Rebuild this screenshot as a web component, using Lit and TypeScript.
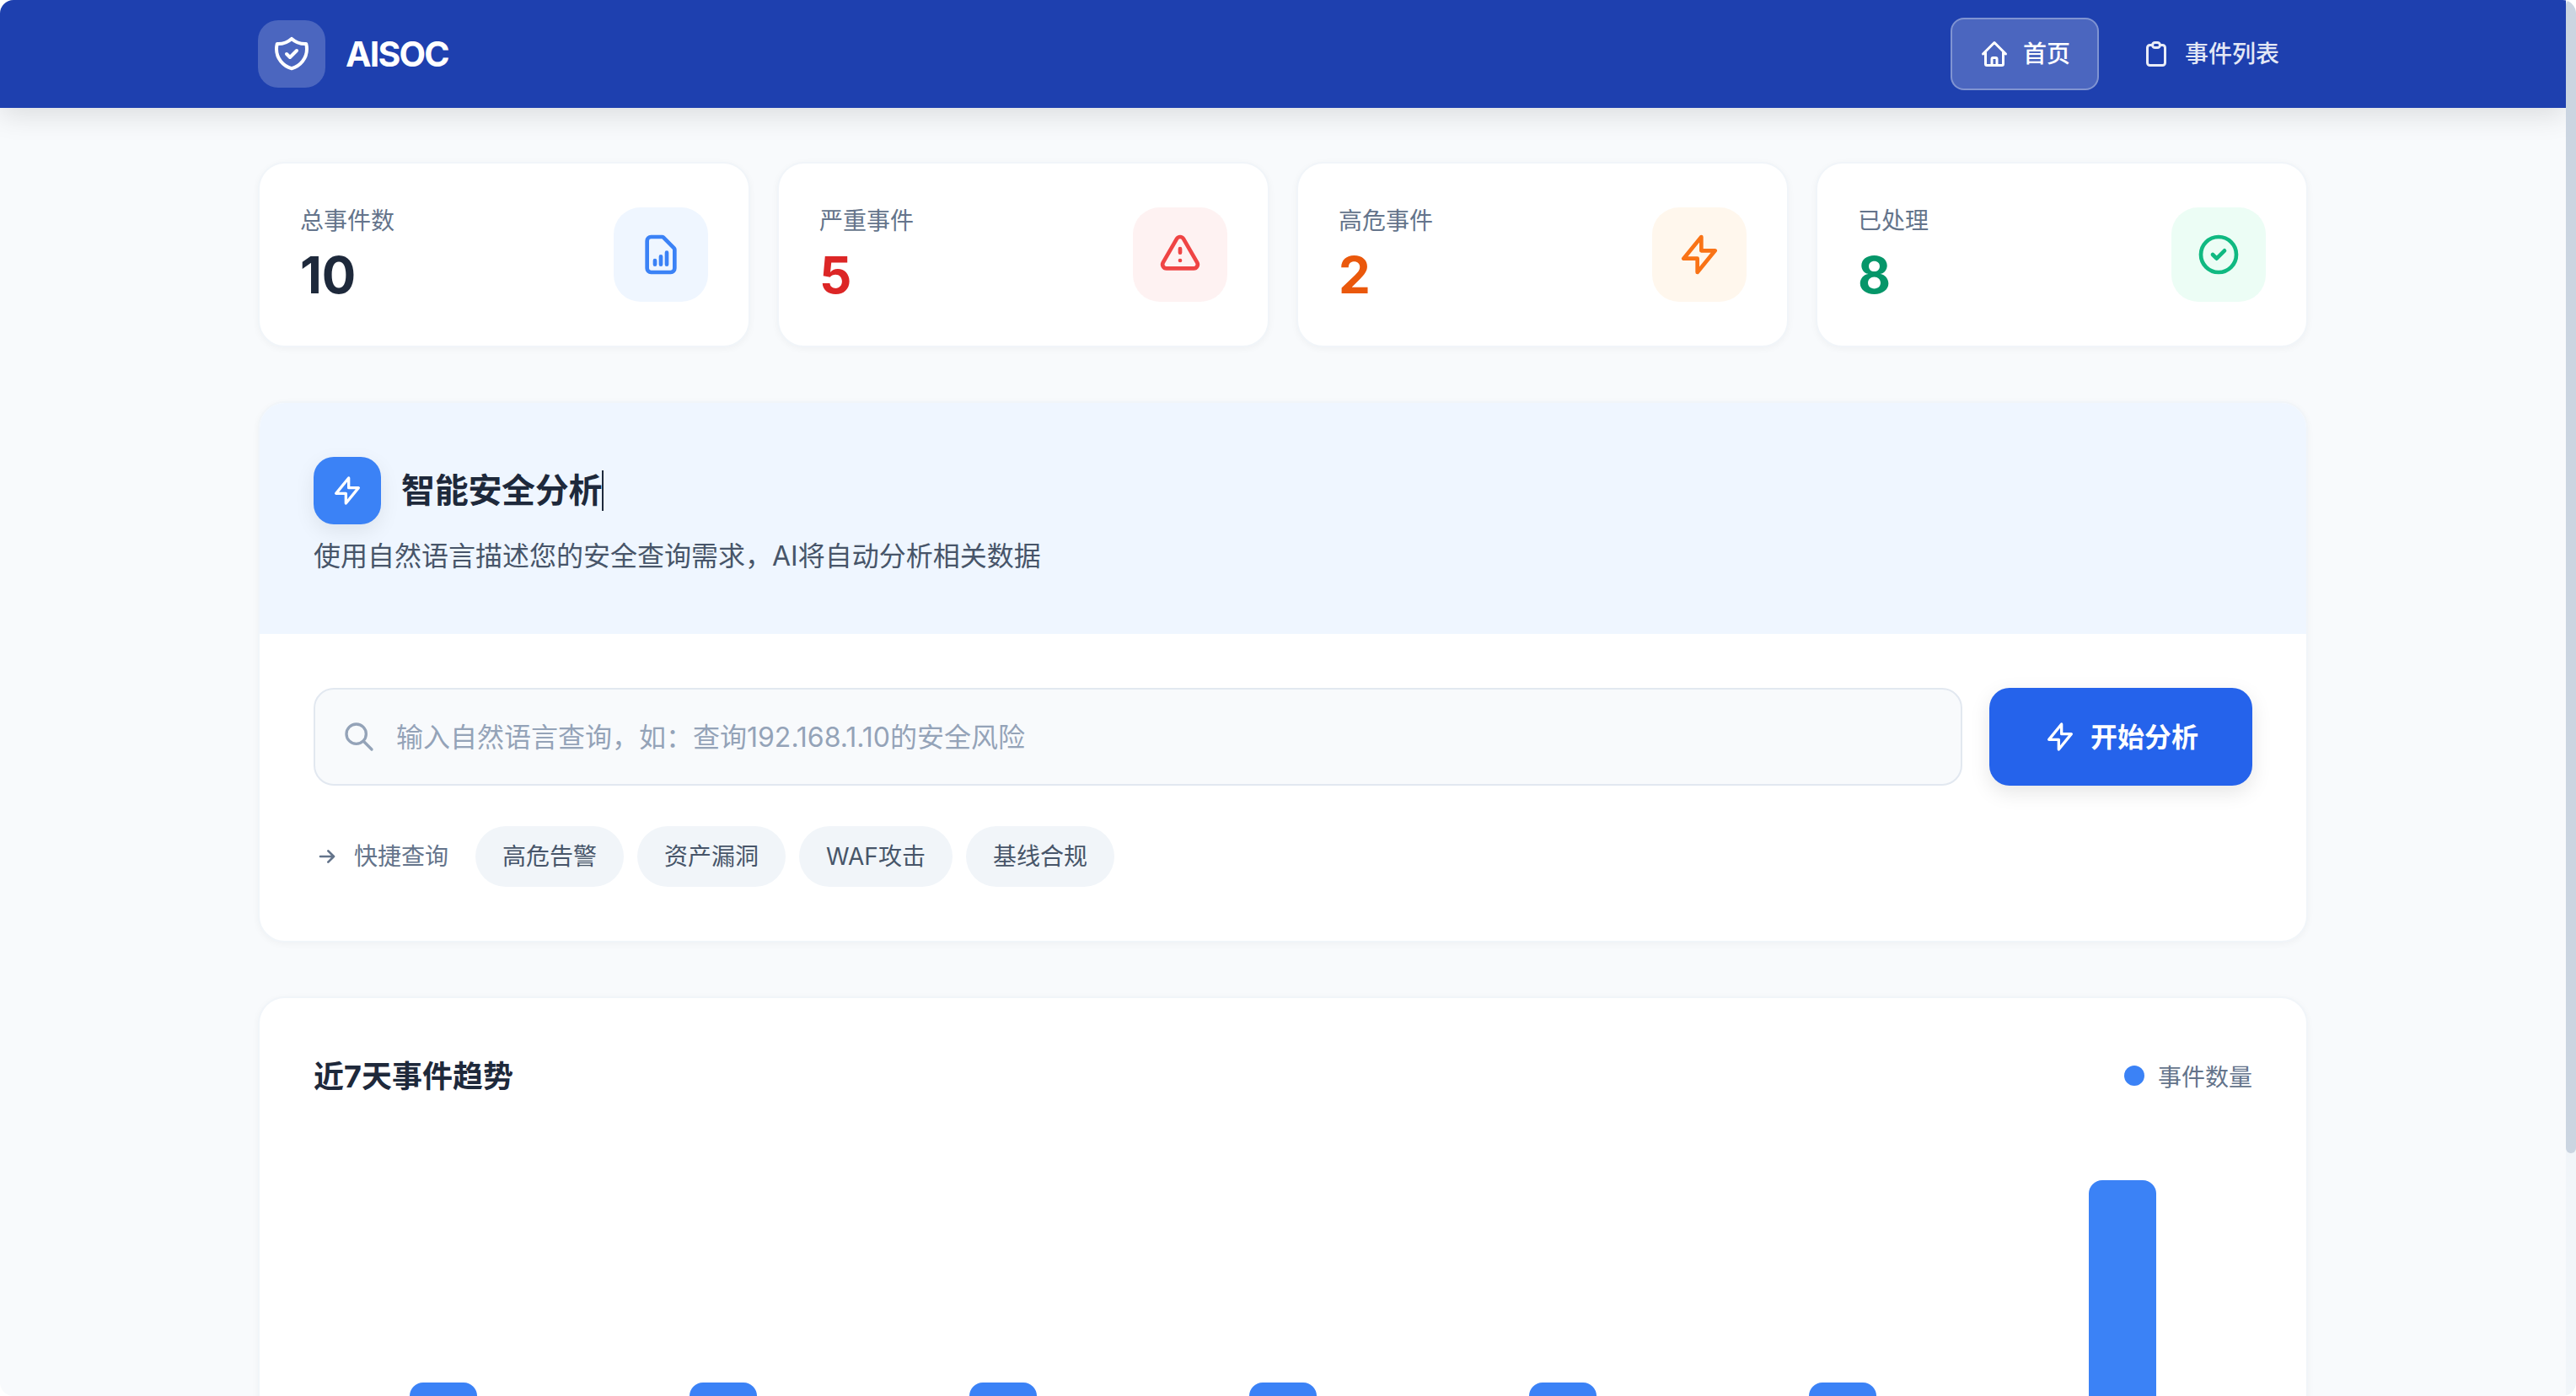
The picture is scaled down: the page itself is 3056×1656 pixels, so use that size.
// app.ts - AISOC dashboard home
import { LitElement, css, html } from "lit";
import { customElement } from "lit/decorators.js";

const ICONS = {
  shield:
    "M9 12l2 2 4-4m5.618-4.016A11.955 11.955 0 0112 2.944a11.955 11.955 0 01-8.618 3.04A12.02 12.02 0 003 9c0 5.591 3.824 10.29 9 11.622 5.176-1.332 9-6.03 9-11.622 0-1.042-.133-2.052-.382-3.016z",
  home: "M3 12l2-2m0 0l7-7 7 7M5 10v10a1 1 0 001 1h3m10-11l2 2m-2-2v10a1 1 0 01-1 1h-3m-6 0a1 1 0 001-1v-4a1 1 0 011-1h2a1 1 0 011 1v4a1 1 0 001 1m-6 0h6",
  clipboard:
    "M9 5H7a2 2 0 00-2 2v12a2 2 0 002 2h10a2 2 0 002-2V7a2 2 0 00-2-2h-2M9 5a2 2 0 002 2h2a2 2 0 002-2M9 5a2 2 0 012-2h2a2 2 0 012 2",
  report:
    "M9 17v-2m3 2v-4m3 4v-6m2 10H7a2 2 0 01-2-2V5a2 2 0 012-2h5.586a1 1 0 01.707.293l5.414 5.414a1 1 0 01.293.707V19a2 2 0 01-2 2z",
  warning:
    "M12 9v2m0 4h.01m-6.938 4h13.856c1.54 0 2.502-1.667 1.732-3L13.732 4c-.77-1.333-2.694-1.333-3.464 0L3.34 16c-.77 1.333.192 3 1.732 3z",
  bolt: "M13 10V3L4 14h7v7l9-11h-7z",
  check: "M9 12l2 2 4-4m6 2a9 9 0 11-18 0 9 9 0 0118 0z",
  search: "M21 21l-6-6m2-5a7 7 0 11-14 0 7 7 0 0114 0z",
  arrow: "M13 7l5 5m0 0l-5 5m5-5H6",
};

const icon = (d: string, size: number) => html`
  <svg
    width=${size}
    height=${size}
    viewBox="0 0 24 24"
    fill="none"
    stroke="currentColor"
    stroke-width="2"
    stroke-linecap="round"
    stroke-linejoin="round"
  >
    <path d=${d}></path>
  </svg>
`;

const STATS = [
  { label: "总事件数", value: "10", tone: "blue", d: ICONS.report },
  { label: "严重事件", value: "5", tone: "red", d: ICONS.warning },
  { label: "高危事件", value: "2", tone: "orange", d: ICONS.bolt },
  { label: "已处理", value: "8", tone: "green", d: ICONS.check },
];

const QUICK = ["高危告警", "资产漏洞", "WAF攻击", "基线合规"];

// bar heights in px, the chart runs on below the fold
const TREND = [160, 160, 160, 160, 160, 160, 400];

@customElement("app-root")
export class AppRoot extends LitElement {
  static styles = css`
    :host {
      display: block;
      height: 100vh;
      overflow: hidden;
      font-family: Inter, "Noto Sans CJK SC", sans-serif;
      color: #1e293b;
    }

    .page {
      width: calc(100vw - 12px);
      height: 100vh;
      overflow: hidden;
      background: #f8fafc;
    }

    /* the capture hides native scrollbars, so this one is drawn */
    .scroll-track {
      position: fixed;
      top: 0;
      right: 0;
      bottom: 0;
      width: 12px;
      background: #f1f5f9;
    }

    .scroll-thumb {
      height: 1368px;
      border-radius: 6px;
      background: #cbd5e1;
    }

    /* the capture has rounded window corners */
    .corners {
      position: fixed;
      inset: 0;
      border-radius: 16px;
      box-shadow: 0 0 0 32px #fff;
      pointer-events: none;
      z-index: 10;
    }

    header {
      position: relative;
      background: #1e40af;
      box-shadow: 0 8px 32px rgba(0, 0, 0, 0.12);
    }

    .wrap {
      max-width: 2560px;
      margin: 0 auto;
      padding: 0 64px;
      box-sizing: border-box;
    }

    .bar {
      height: 128px;
      display: flex;
      align-items: center;
      justify-content: space-between;
    }

    .brand {
      display: flex;
      align-items: center;
      gap: 24px;
      color: #fff;
    }

    .brand-mark {
      width: 80px;
      height: 80px;
      border-radius: 24px;
      background: rgba(255, 255, 255, 0.2);
      display: flex;
      align-items: center;
      justify-content: center;
    }

    .brand-name {
      font-size: 41px;
      font-weight: 700;
      letter-spacing: -1.8px;
    }

    nav {
      display: flex;
      gap: 16px;
    }

    .nav-item {
      display: flex;
      align-items: center;
      gap: 16px;
      padding: 20px 32px;
      border: 2px solid transparent;
      border-radius: 16px;
      font-size: 28px;
      line-height: 42px;
      font-weight: 500;
      color: rgba(255, 255, 255, 0.9);
    }

    .nav-item.active {
      color: #fff;
      background: rgba(255, 255, 255, 0.2);
      border-color: rgba(255, 255, 255, 0.3);
    }

    main.wrap {
      padding-top: 64px;
      padding-bottom: 64px;
      display: flex;
      flex-direction: column;
      gap: 64px;
    }

    .stats {
      display: grid;
      grid-template-columns: repeat(4, 1fr);
      gap: 32px;
    }

    .card {
      background: #fff;
      border: 2px solid #f1f5f9;
      border-radius: 32px;
      box-shadow: 0 2px 8px rgba(0, 0, 0, 0.04);
    }

    .stat {
      padding: 48px;
      display: flex;
      align-items: center;
      justify-content: space-between;
    }

    .stat-label {
      font-size: 28px;
      line-height: 40px;
      margin-bottom: 8px;
      color: #64748b;
    }

    .stat-value {
      font-size: 60px;
      line-height: 72px;
      font-weight: 700;
    }

    .stat-icon {
      width: 112px;
      height: 112px;
      border-radius: 32px;
      display: flex;
      align-items: center;
      justify-content: center;
    }

    .blue .stat-icon {
      background: #eff6ff;
      color: #3b82f6;
    }
    .red .stat-icon {
      background: #fef2f2;
      color: #ef4444;
    }
    .orange .stat-icon {
      background: #fff7ed;
      color: #f97316;
    }
    .green .stat-icon {
      background: #ecfdf5;
      color: #10b981;
    }
    .blue .stat-value {
      color: #1e293b;
    }
    .red .stat-value {
      color: #dc2626;
    }
    .orange .stat-value {
      color: #ea580c;
    }
    .green .stat-value {
      color: #059669;
    }

    .analysis {
      overflow: hidden;
    }

    .analysis-head {
      background: #eff6ff;
      padding: 64px;
      border-bottom: 2px solid #eff6ff;
    }

    .analysis-title {
      display: flex;
      align-items: center;
      gap: 24px;
    }

    .analysis-mark {
      width: 80px;
      height: 80px;
      border-radius: 24px;
      background: #3b82f6;
      color: #fff;
      display: flex;
      align-items: center;
      justify-content: center;
      box-shadow: 0 8px 24px rgba(0, 0, 0, 0.08);
    }

    .typing {
      font-size: 40px;
      line-height: 48px;
      font-weight: 700;
      letter-spacing: -0.3px;
      border-right: 2px solid #1e293b;
    }

    .analysis-sub {
      margin: 12px 0 0;
      font-size: 32px;
      line-height: 52px;
      color: #475569;
    }

    .analysis-body {
      padding: 64px;
    }

    .query {
      display: flex;
      gap: 32px;
    }

    .field {
      flex: 1;
      height: 116px;
      box-sizing: border-box;
      display: flex;
      align-items: center;
      gap: 24px;
      padding: 0 32px;
      background: #f8fafc;
      border: 2px solid #e2e8f0;
      border-radius: 24px;
      color: #94a3b8;
    }

    .field input {
      flex: 1;
      border: none;
      outline: none;
      background: transparent;
      padding: 0;
      font: inherit;
      font-size: 32px;
      color: #1e293b;
    }

    .field input::placeholder {
      color: #94a3b8;
    }

    .go {
      width: 312px;
      height: 116px;
      border: none;
      border-radius: 24px;
      background: #2563eb;
      color: #fff;
      font: inherit;
      font-size: 32px;
      font-weight: 600;
      display: flex;
      align-items: center;
      justify-content: center;
      gap: 16px;
      box-shadow: 0 8px 24px rgba(0, 0, 0, 0.1);
    }

    .go span {
      margin-bottom: 4px;
    }

    .quick {
      margin-top: 48px;
      display: flex;
      align-items: center;
      gap: 16px;
      font-size: 28px;
      line-height: 44px;
      color: #64748b;
    }

    .quick-label {
      margin-right: 16px;
    }

    .chip {
      padding: 0 32px;
      height: 72px;
      line-height: 72px;
      border-radius: 36px;
      background: #f1f5f9;
      color: #475569;
    }

    .trend {
      padding: 64px;
    }

    .trend-head {
      display: flex;
      align-items: center;
      justify-content: space-between;
      height: 56px;
    }

    .trend-title {
      font-size: 36px;
      font-weight: 700;
      margin-bottom: 4px;
    }

    .legend {
      display: flex;
      align-items: center;
      gap: 16px;
      font-size: 28px;
      color: #64748b;
    }

    .dot {
      width: 24px;
      height: 24px;
      border-radius: 50%;
      background: #3b82f6;
    }

    .chart {
      margin-top: 96px;
      display: grid;
      grid-template-columns: repeat(7, 1fr);
      gap: 24px;
    }

    .col {
      display: flex;
      align-items: flex-end;
      justify-content: center;
      height: 400px;
    }

    .col-bar {
      width: 80px;
      border-radius: 16px 16px 0 0;
      background: #3b82f6;
    }
  `;

  render() {
    return html`
      <div class="page">
        <header>
          <div class="wrap bar">
            <div class="brand">
              <div class="brand-mark">${icon(ICONS.shield, 48)}</div>
              <span class="brand-name">AISOC</span>
            </div>
            <nav>
              <div class="nav-item active">${icon(ICONS.home, 36)}<span>首页</span></div>
              <div class="nav-item">${icon(ICONS.clipboard, 36)}<span>事件列表</span></div>
            </nav>
          </div>
        </header>

        <main class="wrap">
          <section class="stats">
            ${STATS.map(
              (s) => html`
                <div class="card stat ${s.tone}">
                  <div>
                    <div class="stat-label">${s.label}</div>
                    <div class="stat-value">${s.value}</div>
                  </div>
                  <div class="stat-icon">${icon(s.d, 56)}</div>
                </div>
              `
            )}
          </section>

          <section class="card analysis">
            <div class="analysis-head">
              <div class="analysis-title">
                <div class="analysis-mark">${icon(ICONS.bolt, 40)}</div>
                <span class="typing">智能安全分析</span>
              </div>
              <p class="analysis-sub">使用自然语言描述您的安全查询需求，AI将自动分析相关数据</p>
            </div>
            <div class="analysis-body">
              <div class="query">
                <label class="field">
                  ${icon(ICONS.search, 40)}
                  <input placeholder="输入自然语言查询，如：查询192.168.1.10的安全风险" />
                </label>
                <button class="go">${icon(ICONS.bolt, 40)}<span>开始分析</span></button>
              </div>
              <div class="quick">
                ${icon(ICONS.arrow, 32)}
                <span class="quick-label">快捷查询</span>
                ${QUICK.map((q) => html`<span class="chip">${q}</span>`)}
              </div>
            </div>
          </section>

          <section class="card trend">
            <div class="trend-head">
              <span class="trend-title">近7天事件趋势</span>
              <span class="legend"><i class="dot"></i>事件数量</span>
            </div>
            <div class="chart">
              ${TREND.map(
                (h) => html`
                  <div class="col">
                    <div class="col-bar" style="height: ${h}px"></div>
                  </div>
                `
              )}
            </div>
          </section>
        </main>
      </div>
      <div class="scroll-track"><div class="scroll-thumb"></div></div>
      <div class="corners"></div>
    `;
  }
}

declare global {
  interface HTMLElementTagNameMap {
    "app-root": AppRoot;
  }
}
